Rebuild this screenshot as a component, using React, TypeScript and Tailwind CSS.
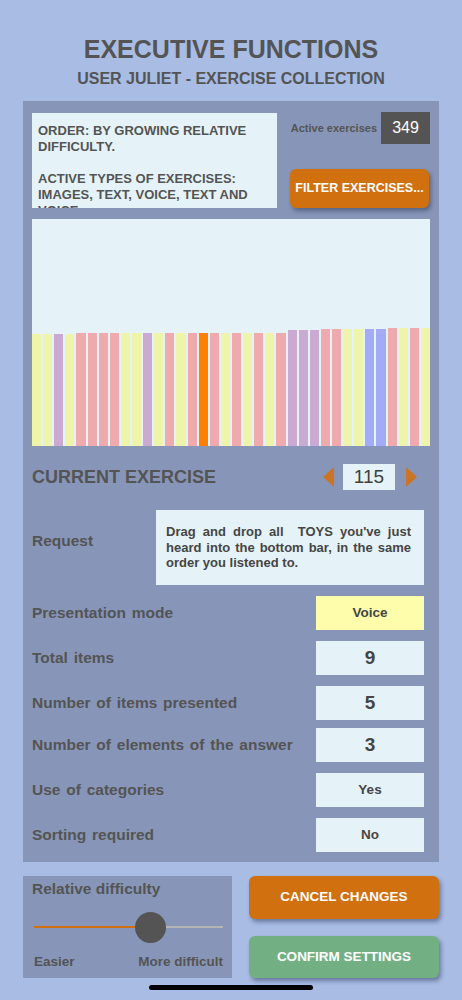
import React from "react";

const COLORS: Record<string, string> = {
  y: "#eef5ab",
  k: "#eeaaad",
  p: "#cbaad2",
  b: "#a3abf4",
  o: "#ff8000",
};

const seq = "yypykkkkyypykykokykykykpppkkyybbkyky".split("");
const heightFor = (i: number) => {
  if (i < 4) return 112;
  if (i < 8) return 112.7;
  if (i < 23) return 113.3;
  if (i < 26) return 115.7;
  if (i < 32) return 117;
  return 118;
};

function Row({ label, value, mt, yellow, big }: { label: string; value: string; mt: string; yellow?: boolean; big?: boolean }) {
  return (
    <div className={`flex items-center pl-[9px] pr-[15px] ${mt}`}>
      <div className="text-[15.5px] font-bold text-[#545454] leading-none [word-spacing:1.5px]">{label}</div>
      <div
        className={`ml-auto w-[108px] h-[34px] flex items-center justify-center text-[#454545] ${
          yellow ? "bg-[#fdfdac]" : "bg-[#e5f3f8]"
        } ${big ? "text-[19px] font-semibold" : "text-[13.5px] font-bold"}`}
      >
        {value}
      </div>
    </div>
  );
}

export default function App() {
  return (
    <div
      className="w-[462px] min-h-[1000px] bg-[#a8bce4] flex flex-col"
      style={{ fontFamily: '"Liberation Sans", Arial, sans-serif' }}
    >
      <div className="pt-[37px] flex flex-col items-center text-[#545454]">
        <div className="text-[25px] font-bold leading-none">EXECUTIVE FUNCTIONS</div>
        <div className="mt-[9px] text-[16px] font-bold leading-none">USER JULIET - EXERCISE COLLECTION</div>
      </div>

      <div className="mx-[23px] mt-[14px] bg-[#8796b8] pt-[11px] pb-[10px] flex flex-col">
        {/* top row */}
        <div className="flex pl-[9px] pr-[9px]">
          <div className="mt-[1px] w-[245px] h-[95px] overflow-hidden bg-[#e5f3f8] px-[6px] pt-[10px] text-[13px] font-bold leading-[16px] text-[#545454]">
            ORDER: BY GROWING RELATIVE DIFFICULTY.
            <br />
            <br />
            ACTIVE TYPES OF EXERCISES: IMAGES, TEXT, VOICE, TEXT AND VOICE
          </div>
          <div className="flex-1 flex flex-col items-end">
            <div className="flex items-center">
              <span className="text-[11px] font-bold text-[#545454]">Active exercises</span>
              <div className="ml-[4px] w-[49px] h-[32px] bg-[#545454] text-white text-[16px] flex items-center justify-center">
                349
              </div>
            </div>
            <button className="mt-auto mr-[1px] w-[139px] h-[39px] rounded-[6px] bg-[#d1700f] text-white text-[12.5px] font-bold shadow-[2px_3px_4px_rgba(30,40,70,0.45)]">
              FILTER EXERCISES...
            </button>
          </div>
        </div>

        {/* chart */}
        <div className="mt-[11px] ml-[9px] mr-[9px] h-[227px] bg-[#e5f3f8] flex items-end gap-[2px]">
          {seq.map((c, i) => (
            <div
              key={i}
              className="flex-1"
              style={{ height: heightFor(i), backgroundColor: COLORS[c] }}
            />
          ))}
        </div>

        {/* current exercise */}
        <div className="mt-[18px] h-[26px] flex items-center pl-[9px] pr-[22px]">
          <div className="text-[18px] font-bold leading-none text-[#545454]">CURRENT EXERCISE</div>
          <div className="ml-auto flex items-center">
            <svg width="11" height="20" viewBox="0 0 11 20">
              <polygon points="11,0 0,10 11,20" fill="#cc7426" />
            </svg>
            <div className="ml-[9px] w-[52px] h-[26px] bg-[#e5f3f8] flex items-center justify-center text-[19px] text-[#3f3f3f]">
              115
            </div>
            <svg className="ml-[11px]" width="11" height="20" viewBox="0 0 11 20">
              <polygon points="0,0 11,10 0,20" fill="#cc7426" />
            </svg>
          </div>
        </div>

        {/* request */}
        <div className="mt-[20px] flex items-start pl-[9px] pr-[15px]">
          <div className="mt-[23px] text-[15.5px] font-bold leading-none text-[#545454]">Request</div>
          <div className="ml-auto w-[268px] h-[75px] bg-[#e5f3f8] pl-[10px] pr-[13px] flex items-center">
            <p className="text-[13px] font-bold leading-[15.5px] text-[#454545] text-justify">
              Drag and drop all&nbsp; TOYS you've just heard into the bottom bar, in the same order you listened to.
            </p>
          </div>
        </div>

        <Row label="Presentation mode" value="Voice" mt="mt-[11px]" yellow />
        <Row label="Total items" value="9" mt="mt-[11px]" big />
        <Row label="Number of items presented" value="5" mt="mt-[11px]" big />
        <Row label="Number of elements of the answer" value="3" mt="mt-[8px]" big />
        <Row label="Use of categories" value="Yes" mt="mt-[11px]" />
        <Row label="Sorting required" value="No" mt="mt-[11px]" />
      </div>

      {/* bottom */}
      <div className="mt-[14px] mx-[23px] flex">
        <div className="w-[209px] h-[102px] bg-[#8796b8] pl-[9px] pt-[5px] flex flex-col">
          <div className="text-[15.5px] font-bold leading-none text-[#545454]">Relative difficulty</div>
          <div className="relative mt-[15px] ml-[2px] w-[189px] h-[31px]">
            <div className="absolute left-0 top-[14.5px] w-[104px] h-[2px] bg-[#d1700f]" />
            <div className="absolute left-[132px] top-[14.5px] w-[57px] h-[2px] bg-[#b4b4b4]" />
            <div className="absolute left-[101px] top-0 w-[31px] h-[31px] rounded-full bg-[#545454]" />
          </div>
          <div className="mt-[12px] ml-[2px] w-[189px] flex justify-between text-[13.5px] font-bold leading-none text-[#545454]">
            <span>Easier</span>
            <span>More difficult</span>
          </div>
        </div>
        <div className="ml-auto w-[190px] flex flex-col">
          <button className="h-[43px] rounded-[6px] bg-[#d1700f] text-white text-[13.5px] font-bold shadow-[2px_3px_4px_rgba(30,40,70,0.45)]">
            CANCEL CHANGES
          </button>
          <button className="mt-[17px] h-[42px] rounded-[6px] bg-[#72b084] text-white text-[13.5px] font-bold shadow-[2px_3px_4px_rgba(30,40,70,0.45)]">
            CONFIRM SETTINGS
          </button>
        </div>
      </div>

      <div className="mt-[7px] mx-auto w-[164px] h-[5px] rounded-full bg-black" />
    </div>
  );
}
